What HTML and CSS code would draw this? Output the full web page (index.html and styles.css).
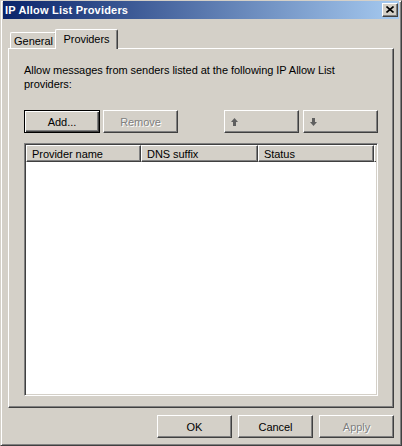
FILE: index.html
```html
<!DOCTYPE html>
<html>
<head>
<meta charset="utf-8">
<link rel="stylesheet" href="styles.css">
</head>
<body>
<div class="window">
  <div class="titlebar">
    <span class="title">IP Allow List Providers</span>
    <span class="close-btn">
      <svg width="8" height="7" viewBox="0 0 8 7"><path d="M0.5 0.5 L7.5 6.5 M7.5 0.5 L0.5 6.5" stroke="#000" stroke-width="1.6" fill="none"/></svg>
    </span>
  </div>
  <div class="tabs">
    <div class="tab tab-general">General</div>
    <div class="tab tab-active">Providers</div>
  </div>
  <div class="panel">
    <p class="intro">Allow messages from senders listed at the following IP Allow List providers:</p>
    <div class="toolbar">
      <div class="group group-left">
        <button class="btn btn-default">Add...</button>
        <button class="btn disabled">Remove</button>
      </div>
      <div class="group group-right">
        <button class="btn btn-icon"><svg width="7" height="8" viewBox="0 0 7 8"><polygon points="3.5,0 7,4 5,4 5,8 2,8 2,4 0,4" fill="#5f5f5f"/></svg></button>
        <button class="btn btn-icon"><svg width="7" height="8" viewBox="0 0 7 8"><polygon points="3.5,8 7,4 5,4 5,0 2,0 2,4 0,4" fill="#5f5f5f"/></svg></button>
      </div>
    </div>
    <div class="listview">
      <div class="header">
        <div class="col col-name">Provider name</div>
        <div class="col col-dns">DNS suffix</div>
        <div class="col col-status">Status</div>
        <div class="col col-fill"></div>
      </div>
    </div>
  </div>
  <div class="footer">
    <button class="btn">OK</button>
    <button class="btn">Cancel</button>
    <button class="btn disabled">Apply</button>
  </div>
</div>
</body>
</html>
```
FILE: styles.css
```css
* { box-sizing: border-box; }
html, body { margin: 0; padding: 0; background: #d4d0c8; }
body { font-family: "Liberation Sans", Arial, sans-serif; font-size: 11px; letter-spacing: -0.05px; color: #000; }

.window {
  width: 402px;
  height: 446px;
  background: #d4d0c8;
  border-top: 1px solid #d4d0c8;
  border-left: 1px solid #d4d0c8;
  border-right: 1px solid #404040;
  border-bottom: 1px solid #404040;
  box-shadow: inset 1px 1px #fff, inset -1px -1px #808080;
  padding: 0 2px 2px 2px;
}

.titlebar {
  height: 18px;
  background: linear-gradient(to right, #0a246a, #a6caf0);
  display: flex;
  align-items: center;
  padding-left: 2px;
}
.title {
  color: #fff;
  font-weight: bold;
  font-size: 11px;
  letter-spacing: 0.2px;
}
.close-btn {
  margin-left: auto;
  margin-right: 1px;
  width: 16px;
  height: 14px;
  background: #d4d0c8;
  border-top: 1px solid #fff;
  border-left: 1px solid #fff;
  border-right: 1px solid #404040;
  border-bottom: 1px solid #404040;
  box-shadow: inset -1px -1px #808080;
  display: flex;
  align-items: center;
  justify-content: center;
  padding-bottom: 1px;
}
.close-btn svg { display: block; }

.tabs {
  display: flex;
  align-items: flex-end;
  height: 20px;
  margin: 10px 0 -1px 7px;
  position: relative;
  z-index: 1;
}
.tab {
  display: flex;
  align-items: center;
  justify-content: center;
  background: #d4d0c8;
  border-top: 1px solid #fff;
  border-left: 1px solid #fff;
  border-right: 1px solid #404040;
  box-shadow: inset -1px 0 #808080;
  border-radius: 2px 2px 0 0;
}
.tab-general {
  width: 47px;
  height: 16px;
  margin-bottom: 1px;
  padding-top: 1px;
}
.tab-active {
  width: 63px;
  height: 20px;
  margin-left: -2px;
  padding-bottom: 2px;
}

.panel {
  margin-left: 5px;
  width: 386px;
  height: 360px;
  border-top: 1px solid #fff;
  border-left: 1px solid #fff;
  border-right: 1px solid #404040;
  border-bottom: 1px solid #404040;
  box-shadow: inset -1px -1px #808080;
  padding: 14px 15px 0 15px;
}
.intro {
  margin: 0;
  max-width: 330px;
  line-height: 14px;
}

.toolbar {
  margin-top: 19px;
  display: flex;
  justify-content: space-between;
}
.group { display: flex; }
.group-left { gap: 3px; }
.group-right { gap: 4px; }

.btn {
  width: 75px;
  height: 23px;
  margin: 0;
  padding: 0;
  font-family: "Liberation Sans", Arial, sans-serif;
  font-size: 11px;
  letter-spacing: -0.05px;
  color: #000;
  background: #d4d0c8;
  border-top: 1px solid #fff;
  border-left: 1px solid #fff;
  border-right: 1px solid #404040;
  border-bottom: 1px solid #404040;
  box-shadow: inset -1px -1px #808080;
  display: flex;
  align-items: center;
  justify-content: center;
}
.btn-default {
  width: 76px;
  border: 1px solid #000;
  box-shadow: inset 1px 1px #fff, inset -1px -1px #404040, inset -2px -2px #808080;
}
.btn.disabled {
  color: #808080;
  text-shadow: 1px 1px #fff;
}
.btn-icon {
  justify-content: flex-start;
  padding-left: 6px;
}
.btn-icon svg { display: block; }

.listview {
  margin-top: 10px;
  width: 354px;
  height: 253px;
  background: #fff;
  border-top: 1px solid #808080;
  border-left: 1px solid #808080;
  border-right: 1px solid #fff;
  border-bottom: 1px solid #fff;
  box-shadow: inset 1px 1px #404040, inset -1px -1px #d4d0c8;
  padding: 1px;
}
.header {
  display: flex;
  height: 17px;
}
.col {
  height: 17px;
  background: #d4d0c8;
  border-top: 1px solid #fff;
  border-left: 1px solid #fff;
  border-right: 1px solid #404040;
  border-bottom: 1px solid #404040;
  box-shadow: inset -1px -1px #808080;
  padding-left: 5px;
  display: flex;
  align-items: center;
  white-space: nowrap;
}
.col-name { width: 115px; }
.col-dns { width: 117px; }
.col-status { width: 116px; }
.col-fill { flex: 1; padding: 0; border-right: none; box-shadow: none; border-bottom: 1px solid #404040; }

.footer {
  display: flex;
  justify-content: flex-end;
  gap: 6px;
  margin-top: 7px;
  padding-right: 5px;
}
```
